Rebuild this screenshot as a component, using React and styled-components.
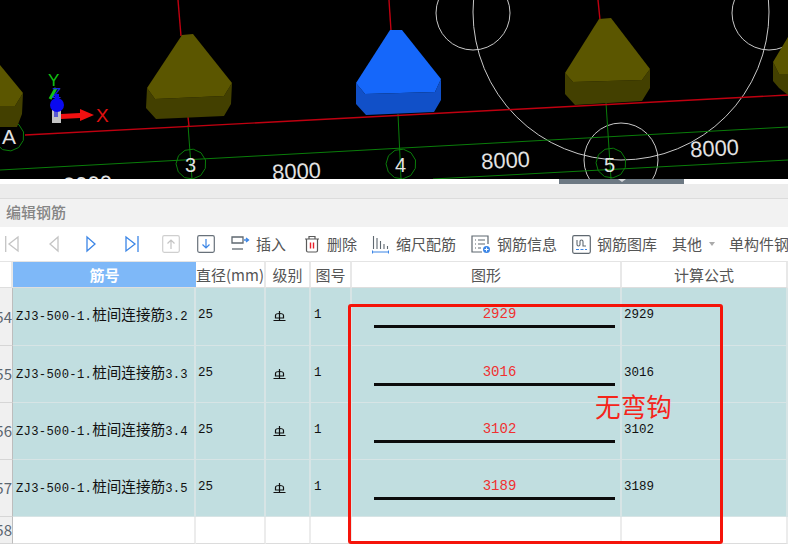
import React from "react";
import styled, { createGlobalStyle } from "styled-components";

const Global = createGlobalStyle`
  html, body { margin: 0; padding: 0; background: #fff; }
  body { font-family: "Noto Sans CJK SC", "Noto Sans", sans-serif; }
`;

const Page = styled.div`
  width: 788px;
  height: 552px;
  overflow: hidden;
  display: flex;
  flex-direction: column;
  background: #fff;
`;

const Viewport = styled.svg`
  display: block;
  width: 788px;
  height: 179px;
  flex: none;
  background: #000;
`;

const SplitterBar = styled.div`
  height: 5px;
  flex: none;
  background: #fff;
  display: flex;
  justify-content: flex-start;
  padding-left: 559px;
`;

const SplitterHandle = styled.div`
  width: 125px;
  height: 5px;
  background: #6d7983;
  display: flex;
  justify-content: center;
  &::after {
    content: "";
    width: 0;
    height: 0;
    border-left: 4px solid transparent;
    border-right: 4px solid transparent;
    border-top: 3px solid #d5d9dc;
  }
`;

const Gutter = styled.div`
  height: 14px;
  flex: none;
  background: #ececec;
  border-bottom: 1px solid #dcdcdc;
`;

const PanelTitle = styled.div`
  height: 28px;
  flex: none;
  background: #f2f2f2;
  color: #858585;
  font-size: 15px;
  font-weight: 500;
  line-height: 25px;
  padding-left: 6px;
`;

const Toolbar = styled.div`
  height: 34px;
  flex: none;
  background: #fff;
  display: flex;
  align-items: center;
  white-space: nowrap;
  overflow: hidden;
`;

const ToolItem = styled.div`
  flex: none;
  display: flex;
  align-items: center;
  gap: ${(p) => p.$gap ?? 6}px;
  margin-left: ${(p) => p.$left}px;
  color: #555;
  font-size: 15px;
  line-height: 36px;
  height: 34px;
`;

const Caret = styled.span`
  width: 0;
  height: 0;
  border-left: 3px solid transparent;
  border-right: 3px solid transparent;
  border-top: 4px solid #aaa;
  margin-left: 1px;
`;

const Table = styled.div`
  position: relative;
  flex: none;
  height: 291px;
  background: #fff;
  display: grid;
  grid-template-columns: 13px 183px 70px 45px 41px 270px 166px;
  grid-template-rows: 27px 58px 57px 57px 57px 27px 1fr;
`;

const HeadCell = styled.div`
  background: ${(p) => (p.$active ? "#7eb8f8" : "#fff")};
  color: ${(p) => (p.$active ? "#fff" : "#555")};
  font-size: 15px;
  font-weight: ${(p) => (p.$active ? 700 : 400)};
  display: flex;
  align-items: center;
  justify-content: center;
  white-space: nowrap;
  border-top: 1px solid #e4e4e4;
  border-right: ${(p) => (p.$active ? "0" : "2px solid #e8e8e8")};
  border-bottom: 1px solid #dedede;
  box-sizing: border-box;
  overflow: hidden;
`;

const RowNum = styled.div`
  background: #f0f0f0;
  color: #5b6670;
  font-size: 15px;
  display: flex;
  justify-content: flex-end;
  align-items: center;
  overflow: hidden;
  border-right: 1px solid #bdbdbd;
  border-bottom: 1px solid #d6d6d6;
  box-sizing: border-box;
  padding-bottom: ${(p) => (p.$blank ? 2 : 1)}px;
`;

const Cell = styled.div`
  background: ${(p) => (p.$blank ? "#fff" : "#c1dee0")};
  border-right: 2px solid ${(p) => (p.$blank ? "#ececec" : "#d7e4e5")};
  border-bottom: 1px solid ${(p) => (p.$blank ? "#dcdcdc" : "#d7e4e5")};
  box-sizing: border-box;
  color: #111;
  font-family: "Liberation Mono", "Noto Sans CJK SC", monospace;
  font-size: 12.5px;
  padding: 20px 0 0 ${(p) => p.$pad ?? 2}px;
  line-height: 14px;
  white-space: nowrap;
  overflow: hidden;
`;

const NameCell = styled(Cell)`
  padding: 17px 0 0 3px;
  line-height: 18px;
  display: flex;
  align-items: flex-start;
`;

const Latin = styled.span`
  font-family: "Liberation Mono", monospace;
  font-size: 12.2px;
  letter-spacing: 0.3px;
`;

const Han = styled.span`
  font-family: "Noto Sans CJK SC", sans-serif;
  font-size: 14.6px;
`;

const ShapeCell = styled(Cell)`
  padding: 18px 0 0;
  display: flex;
  flex-direction: column;
  align-items: flex-start;
`;

const ShapeLen = styled.div`
  width: 241px;
  padding-left: 54px;
  box-sizing: border-box;
  text-align: center;
  color: #f03030;
  font-family: "Liberation Mono", monospace;
  font-size: 14px;
  line-height: 16px;
`;

const ShapeLine = styled.div`
  width: 241px;
  margin-left: 22px;
  height: 3px;
  margin-top: 3px;
  background: #0c0c0c;
`;

const Callout = styled.div`
  position: absolute;
  left: 348px;
  top: 43px;
  width: 375px;
  height: 240px;
  box-sizing: border-box;
  border: 3px solid #f5140a;
  border-radius: 3px;
  pointer-events: none;
`;

const CalloutLabel = styled.div`
  position: absolute;
  left: 595px;
  top: 132px;
  color: #f5241a;
  font-size: 25.7px;
  line-height: 26px;
  font-weight: 400;
  white-space: nowrap;
`;

const Footer = styled.div`
  flex: 1;
  background: #fff;
`;

const IconSvg = styled.svg`
  display: block;
  flex: none;
`;

const ring = (cx, cy, r, n = 11) =>
  Array.from({ length: n }, (_, i) => {
    const a = (i / n) * Math.PI * 2 + 0.3;
    return `${(cx + r * Math.cos(a)).toFixed(1)},${(cy + r * Math.sin(a)).toFixed(1)}`;
  }).join(" ");

const Pile = ({ top, side, topColor, sideColor }) => (
  <>
    <polygon points={side} fill={sideColor} />
    <polygon points={top} fill={topColor} />
  </>
);

const Label = styled.text`
  font-family: "Liberation Sans", sans-serif;
  fill: #e2e2e2;
`;

const Scene = () => (
  <Viewport viewBox="0 0 788 179">
    <g fill="none" stroke="#c8c8c8" strokeWidth="1">
      <circle cx="621" cy="12" r="148" />
      <circle cx="473" cy="13" r="37" />
      <circle cx="621" cy="160" r="37" />
      <circle cx="769" cy="13" r="37" />
    </g>
    <g stroke="#0a7d0a" strokeWidth="1" fill="none">
      <line x1="0" y1="170" x2="788" y2="127" />
      <line x1="433" y1="179" x2="788" y2="160" />
      <line x1="188" y1="125" x2="192" y2="179" />
      <line x1="398" y1="114" x2="401" y2="179" />
      <line x1="606" y1="103" x2="611" y2="179" />
      <polygon points={ring(191, 164, 15)} />
      <polygon points={ring(401, 164, 15)} />
      <polygon points={ring(611, 163, 15)} />
      <polygon points={ring(9, 136, 15)} />
    </g>
    <g stroke="#c00010" strokeWidth="1.4">
      <line x1="178" y1="0" x2="181" y2="36" />
      <line x1="389" y1="0" x2="391" y2="31" />
      <line x1="598" y1="0" x2="600" y2="20" />
      <line x1="188" y1="117" x2="189" y2="126" />
      <line x1="25" y1="135" x2="788" y2="95" />
    </g>
    <Pile
      topColor="#5b5600"
      sideColor="#434000"
      top="0,65 23,93 15,106 0,106"
      side="15,106 23,93 22,114 17,127 0,127 0,106"
    />
    <Pile
      topColor="#5b5600"
      sideColor="#434000"
      top="182,35 193,34 232,83 224,96 155,99 147,88"
      side="147,88 155,99 224,96 232,83 231,104 224,116 156,119 146,108"
    />
    <Pile
      topColor="#1567fa"
      sideColor="#1150c8"
      top="390,30 402,30 441,79 435,92 365,94 356,83"
      side="356,83 365,94 435,92 441,79 441,100 434,112 366,115 356,104"
    />
    <Pile
      topColor="#5b5600"
      sideColor="#434000"
      top="599,19 611,18 650,69 642,80 573,82 565,73"
      side="565,73 573,82 642,80 650,69 650,88 642,101 575,105 565,94"
    />
    <Pile
      topColor="#5b5600"
      sideColor="#434000"
      top="788,37 773,62 779,74 788,74"
      side="773,62 779,74 788,74 788,95 779,88 773,81"
    />
    <Label x="2" y="144" fontSize="21">A</Label>
    <Label x="185" y="172" fontSize="20">3</Label>
    <Label x="395" y="172" fontSize="20">4</Label>
    <Label x="604" y="172" fontSize="20">5</Label>
    <Label x="63" y="192" fontSize="22" transform="rotate(-3 88 182)">8000</Label>
    <Label x="272" y="179" fontSize="22" transform="rotate(-3 296 171)">8000</Label>
    <Label x="481" y="168" fontSize="22" transform="rotate(-3 505 160)">8000</Label>
    <Label x="690" y="156" fontSize="22" transform="rotate(-3 714 148)">8000</Label>
    <line x1="50" y1="99" x2="56" y2="88" stroke="#12c012" strokeWidth="3" />
    <text x="48" y="86" fontSize="17" fill="#12c012" fontFamily="Liberation Sans">Y</text>
    <text x="52" y="98" fontSize="15" fill="#1a2ae0" fontFamily="Liberation Sans">Z</text>
    <rect x="52" y="110" width="9" height="13" fill="#c4c4c4" />
    <rect x="54" y="111" width="4" height="6" fill="#5a5ad0" />
    <circle cx="57" cy="105" r="7" fill="#0a0af0" />
    <rect x="55" y="94" width="4" height="8" fill="#0a0af0" />
    <polygon points="61,114 80,113 80,109 94,115 80,121 80,118 61,119" fill="#f01010" />
    <text x="96" y="122" fontSize="19" fill="#e01010" fontFamily="Liberation Sans">X</text>
  </Viewport>
);

const Nav = ({ dir, bar, on }) => {
  const c = on ? "#3c86e6" : "#c4c4c4";
  const pts = dir === "l" ? "10,2 2,9 10,16" : "1,2 9,9 1,16";
  return (
    <IconSvg width={bar ? 14 : 11} height="18" viewBox={`0 0 ${bar ? 14 : 11} 18`} fill="none" stroke={c} strokeWidth="1.3">
      {bar && dir === "l" && <line x1="0.7" y1="1" x2="0.7" y2="17" />}
      {bar && dir === "l" && <polygon points="13,2 4,9 13,16" />}
      {bar && dir === "r" && <polygon points="1,2 10,9 1,16" />}
      {bar && dir === "r" && <line x1="13" y1="1" x2="13" y2="17" />}
      {!bar && <polygon points={pts} />}
    </IconSvg>
  );
};

const Move = ({ up }) => {
  const frame = up ? "#cfcfcf" : "#68717a";
  const arrow = up ? "#c4c4c4" : "#3c86e6";
  return (
    <IconSvg width="18" height="18" viewBox="0 0 18 18" fill="none">
      <rect x="0.7" y="0.7" width="16.6" height="16.6" rx="1.5" stroke={frame} strokeWidth="1.2" />
      {up ? (
        <path d="M9 14V5M5.5 8.5L9 5l3.5 3.5" stroke={arrow} strokeWidth="1.2" />
      ) : (
        <path d="M9 4v9M5.5 9.5L9 13l3.5-3.5" stroke={arrow} strokeWidth="1.2" />
      )}
    </IconSvg>
  );
};

const InsertIcon = () => (
  <IconSvg width="19" height="16" viewBox="0 0 19 16" fill="none">
    <path d="M1 1h11v6H1z" stroke="#5f6870" strokeWidth="1.3" />
    <path d="M1 13h11" stroke="#5f6870" strokeWidth="1.3" />
    <path d="M13 4h4M15 2l2.5 2L15 6" stroke="#3c86e6" strokeWidth="1.3" />
  </IconSvg>
);

const TrashIcon = () => (
  <IconSvg width="16" height="18" viewBox="0 0 16 18" fill="none">
    <path d="M1 4h14M5 4V1.5h6V4" stroke="#5a5a5a" strokeWidth="1.2" />
    <path d="M2.5 4v11.5a1.5 1.5 0 0 0 1.5 1.5h8a1.5 1.5 0 0 0 1.5-1.5V4" stroke="#5a5a5a" strokeWidth="1.2" />
    <path d="M6.5 7.5v6M9.5 7.5v6" stroke="#e8202a" strokeWidth="1.4" />
  </IconSvg>
);

const ScaleIcon = () => (
  <IconSvg width="17" height="19" viewBox="0 0 17 19" fill="none">
    <path d="M1.5 1v13M5 3v11M8.5 6v8M12 9v5M15.5 11v3" stroke="#5f6870" strokeWidth="1.1" />
    <path d="M0.5 17h16M0.5 15.5v3M16.5 15.5v3" stroke="#3c86e6" strokeWidth="1.1" />
  </IconSvg>
);

const InfoIcon = () => (
  <IconSvg width="20" height="19" viewBox="0 0 20 19" fill="none">
    <path d="M17 9V1H1v16h10" stroke="#5f6870" strokeWidth="1.2" />
    <path d="M4 5h1M7 5h7M4 9h1M7 9h7M4 13h1M7 13h3" stroke="#5f6870" strokeWidth="1.2" />
    <circle cx="15.5" cy="14.5" r="3.5" fill="#3c86e6" />
    <path d="M15.5 12.5v4M13.5 14.5h4" stroke="#fff" strokeWidth="1" />
  </IconSvg>
);

const LibraryIcon = () => (
  <IconSvg width="19" height="19" viewBox="0 0 19 19" fill="none">
    <rect x="0.7" y="0.7" width="17.6" height="17.6" rx="1.5" stroke="#5f6870" strokeWidth="1.2" />
    <path d="M5 5v4.5a1.5 1.5 0 0 0 3 0V6.5a1.5 1.5 0 0 1 3 0v4.5h3" stroke="#5f6870" strokeWidth="1.1" />
    <path d="M4 14.5h3M8.5 14.5h3M13 14.5h2" stroke="#3c86e6" strokeWidth="1.2" />
  </IconSvg>
);

const GradeMark = styled.svg`
  display: block;
  margin: 2px 0 0 1px;
`;

const GradeIcon = () => (
  <GradeMark width="13" height="12" viewBox="0 0 13 12" fill="none">
    <path d="M0.5 10.5h12M6.5 1v9.5" stroke="#111" strokeWidth="1.2" />
    <path d="M2.5 8V5.5a4 2 0 0 1 8 0V8H2.5z" stroke="#111" strokeWidth="1.2" />
  </GradeMark>
);

const heads = ["直径(mm)", "级别", "图号", "图形", "计算公式"];
const rows = [
  { n: "54", code: "3.2", len: "2929" },
  { n: "55", code: "3.3", len: "3016" },
  { n: "56", code: "3.4", len: "3102" },
  { n: "57", code: "3.5", len: "3189" },
];

export default function App() {
  return (
    <Page>
      <Global />
      <Scene />
      <SplitterBar>
        <SplitterHandle />
      </SplitterBar>
      <Gutter />
      <PanelTitle>编辑钢筋</PanelTitle>
      <Toolbar>
        <ToolItem $left={5}><Nav dir="l" bar /></ToolItem>
        <ToolItem $left={29}><Nav dir="l" /></ToolItem>
        <ToolItem $left={27}><Nav dir="r" on /></ToolItem>
        <ToolItem $left={28}><Nav dir="r" bar on /></ToolItem>
        <ToolItem $left={23}><Move up /></ToolItem>
        <ToolItem $left={17}><Move /></ToolItem>
        <ToolItem $left={16}><InsertIcon />插入</ToolItem>
        <ToolItem $left={18} $gap={7}><TrashIcon />删除</ToolItem>
        <ToolItem $left={15} $gap={7}><ScaleIcon />缩尺配筋</ToolItem>
        <ToolItem $left={15}><InfoIcon />钢筋信息</ToolItem>
        <ToolItem $left={15}><LibraryIcon />钢筋图库</ToolItem>
        <ToolItem $left={15}>其他<Caret /></ToolItem>
        <ToolItem $left={14}>单构件钢筋</ToolItem>
      </Toolbar>
      <Table>
        <HeadCell />
        <HeadCell $active>筋号</HeadCell>
        {heads.map((h) => (
          <HeadCell key={h}>{h}</HeadCell>
        ))}
        {rows.map((r) => (
          <React.Fragment key={r.n}>
            <RowNum>{r.n}</RowNum>
            <NameCell>
              <span>
                <Latin>ZJ3-500-1.</Latin>
                <Han>桩间连接筋</Han>
                <Latin>{r.code}</Latin>
              </span>
            </NameCell>
            <Cell>25</Cell>
            <Cell $pad={6}><GradeIcon /></Cell>
            <Cell $pad={3}>1</Cell>
            <ShapeCell>
              <ShapeLen>{r.len}</ShapeLen>
              <ShapeLine />
            </ShapeCell>
            <Cell>{r.len}</Cell>
          </React.Fragment>
        ))}
        <RowNum $blank>58</RowNum>
        <Cell $blank />
        <Cell $blank />
        <Cell $blank />
        <Cell $blank />
        <Cell $blank />
        <Cell $blank />
        <Callout />
        <CalloutLabel>无弯钩</CalloutLabel>
      </Table>
      <Footer />
    </Page>
  );
}
